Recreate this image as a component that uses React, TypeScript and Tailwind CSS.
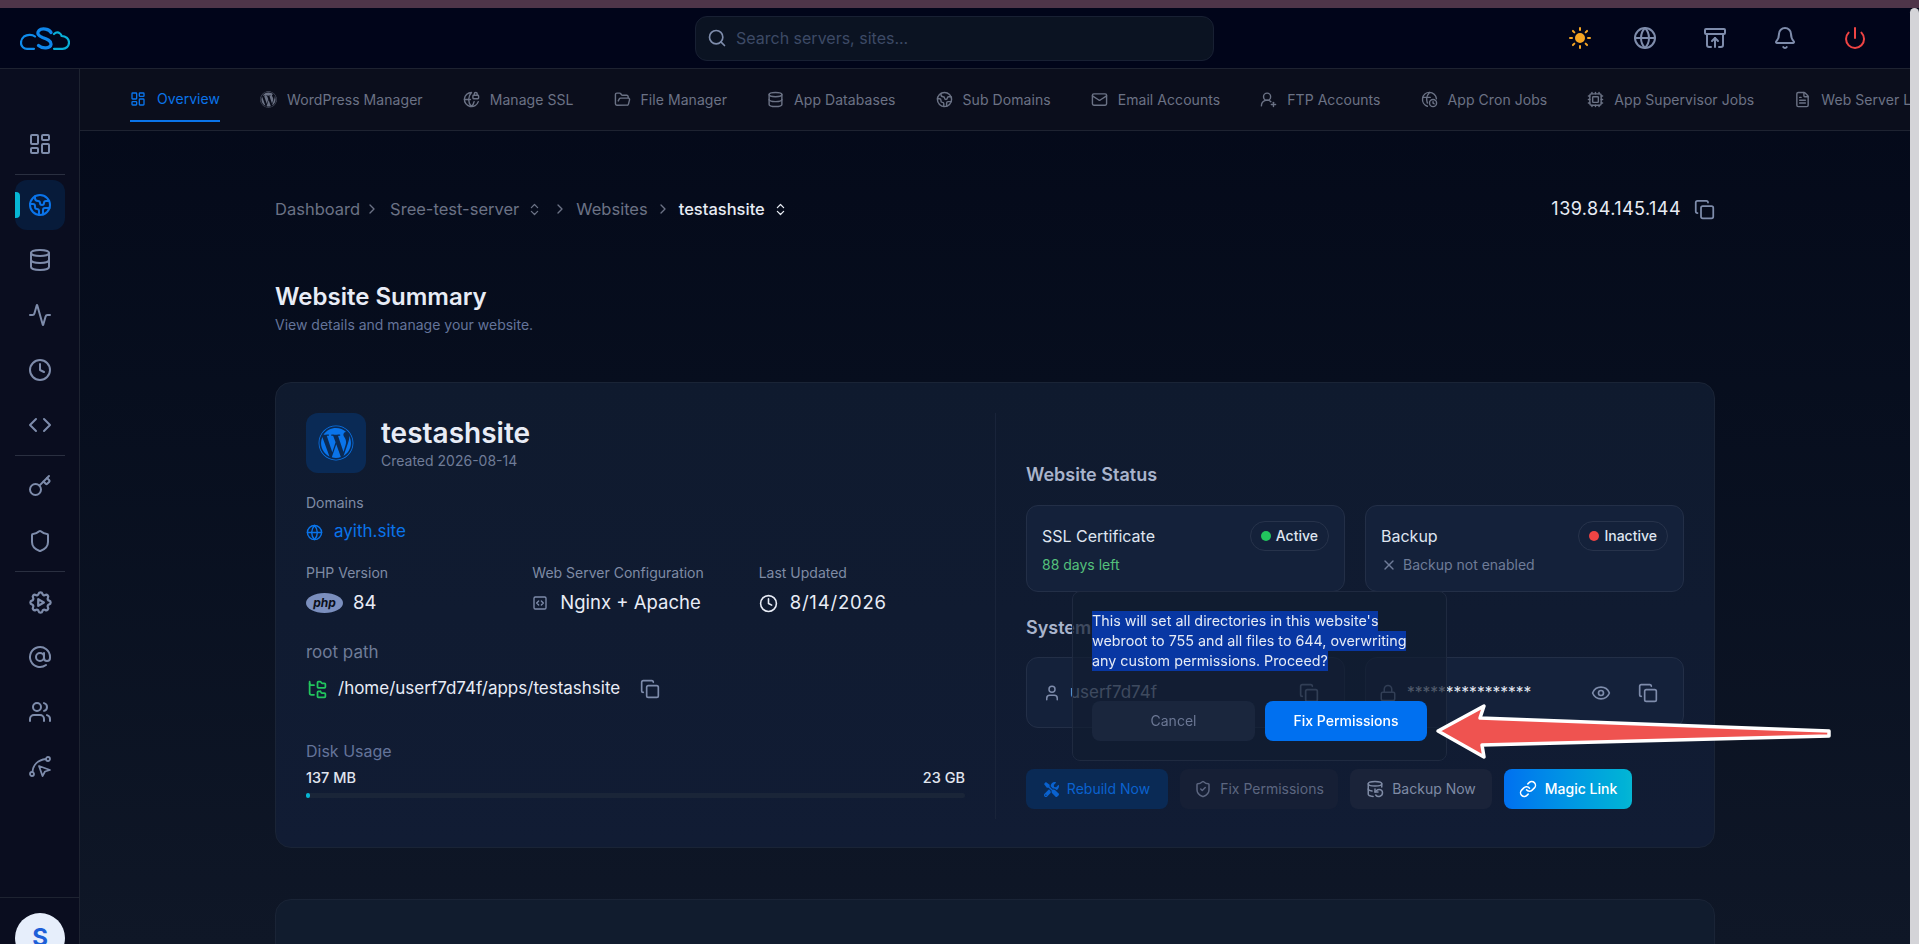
import {
  Activity,
  ArchiveRestore,
  AtSign,
  Bell,
  ChevronRight,
  ChevronsUpDown,
  Clock,
  Code,
  Copy,
  Cpu,
  Database,
  DatabaseBackup,
  Earth,
  Eye,
  FileText,
  FolderOpen,
  FolderTree,
  Globe,
  GlobeLock,
  Key,
  LayoutDashboard,
  Link,
  Lock,
  Mail,
  Power,
  Search,
  Shield,
  ShieldCheck,
  SquareCode,
  Sun,
  User,
  UserRoundPlus,
  Users,
  X,
} from "lucide-react";
import { FaTools, FaWordpress } from "react-icons/fa";
import { TbSettingsAutomation } from "react-icons/tb";

function CronIcon({ size = 17 }: { size?: number }) {
  return (
    <svg width={size} height={size} viewBox="0 0 24 24" fill="none" stroke="currentColor" strokeWidth="2" strokeLinecap="round" strokeLinejoin="round">
      <path d="M12 2a10 10 0 0 0-3 19.5" />
      <path d="M21.8 11A10 10 0 0 0 12 2c-3 3-4 6-4 9 0 2 .4 4 1 6" />
      <path d="M3 9h10" />
      <circle cx="17" cy="17" r="5" />
      <path d="M17 15v2l1.5 1" />
    </svg>
  );
}

function RouteCursorIcon() {
  return (
    <svg width="24" height="24" viewBox="0 0 24 24" fill="none" stroke="currentColor" strokeWidth="1.8" strokeLinecap="round" strokeLinejoin="round">
      <circle cx="4" cy="19" r="2" />
      <circle cx="20" cy="4" r="2" />
      <path d="M4.500 17C5 10 10 5 18 4" />
      <path d="M11 11l11 4-5 1.500L14.500 21z" />
    </svg>
  );
}

function Logo() {
  return (
    <svg width="50" height="23" viewBox="0 0 50 23" fill="none" strokeWidth="2.200" strokeLinecap="round" strokeLinejoin="round">
      <path d="M15 9.500C12 7 7 7.500 4 9.500 1.500 11.500 1 14 1 16c0 3.500 3 5.800 6 5.800h7" stroke="#0f8cec" />
      <path d="M31 5.500C29.500 2 22 0.500 19 3.500c-2.500 2.800-0.500 5.500 3.500 7 4.500 1.500 9 3 8.500 7-0.500 4-8.500 4.500-12.500 1" stroke="#0f86ea" strokeWidth="3.200" />
      <path d="M34 7c2-2 4.500-1.800 6-0.500 1 0.800 1.500 1.800 1.500 2.500 4.500 0 7.500 3 7.500 6.500 0 3.800-3 6.300-6.500 6.300H34" stroke="#09b0d8" />
    </svg>
  );
}

const tabs = [
  { label: "WordPress Manager", icon: <FaWordpress size={17} /> },
  { label: "Manage SSL", icon: <GlobeLock size={17} /> },
  { label: "File Manager", icon: <FolderOpen size={17} /> },
  { label: "App Databases", icon: <Database size={17} /> },
  { label: "Sub Domains", icon: <Earth size={17} /> },
  { label: "Email Accounts", icon: <Mail size={17} /> },
  { label: "FTP Accounts", icon: <UserRoundPlus size={17} /> },
  { label: "App Cron Jobs", icon: <CronIcon /> },
  { label: "App Supervisor Jobs", icon: <Cpu size={17} /> },
  { label: "Web Server Logs", icon: <FileText size={17} /> },
];

function SideItem({ children }: { children: React.ReactNode }) {
  return <div className="w-[50px] h-[50px] flex items-center justify-center text-[#7e8cab] shrink-0">{children}</div>;
}

function Crumb({ children, tone = "text-[#6b7285]" }: { children: React.ReactNode; tone?: string }) {
  return <span className={`text-[16.5px] ${tone}`}>{children}</span>;
}

function CopyBtn({ size = 20 }: { size?: number }) {
  return <Copy size={size} className="text-[#7e8cab] shrink-0" />;
}

function StatusCard({ title, badge, dot, children }: { title: string; badge: string; dot: string; children: React.ReactNode }) {
  return (
    <div className="h-[87px] rounded-xl border border-[#232f47] bg-[#14213a] pl-[15px] pr-[15px] pt-[15px]">
      <div className="flex justify-between items-center h-[30px]">
        <span className="text-base text-[#dfe5f0]">{title}</span>
        <span className="h-[30px] px-[10px] rounded-full border border-[#27334b] flex items-center gap-[5px] text-sm font-medium text-[#dfe5f0]">
          <span className={`w-[10px] h-[10px] rounded-full ${dot}`} />
          {badge}
        </span>
      </div>
      <div className="mt-[4px] text-sm flex items-center h-5">{children}</div>
    </div>
  );
}

export default function App() {
  return (
    <div className="relative h-screen overflow-hidden flex flex-col bg-[#030817] font-['Inter','Liberation_Sans',sans-serif]">
      <div className="h-[8px] bg-[#4e3549] shrink-0" />
      <div className="flex flex-1 min-h-0">
        <div className="flex-1 min-w-0 flex flex-col">
          {/* Header */}
          <header className="h-[61px] shrink-0 flex items-center bg-[#01051a] border-b border-[#1e2331]">
            <div className="w-[695px] pl-[20px] shrink-0 flex">
              <Logo />
            </div>
            <div className="w-[519px] h-[45px] rounded-xl bg-[#0b1322] border border-[#182033] flex items-center pl-[11px] gap-[9px] shrink-0">
              <Search size={20} className="text-[#7e8cab]" />
              <span className="text-base text-[#3d4a66]">Search servers, sites...</span>
            </div>
            <div className="ml-[354px] flex items-center gap-[46px]">
              <Sun size={24} className="text-[#f5a524] -mr-[5px]" fill="#f5a524" />
              <Globe size={24} className="text-[#7e8cab]" />
              <ArchiveRestore size={24} className="text-[#7e8cab]" />
              <Bell size={24} className="text-[#7e8cab]" />
              <Power size={24} className="text-[#ef4444]" />
            </div>
          </header>

          <div className="flex flex-1 min-h-0">
            {/* Sidebar */}
            <aside className="w-[80px] shrink-0 border-r border-[#1e2331] bg-[#0a0d1f] flex flex-col">
              <div className="pt-[50px] pl-[15px] flex flex-col gap-[5px] flex-1">
                <SideItem><LayoutDashboard size={24} /></SideItem>
                <div className="w-[50px] h-px bg-[#2a2f40]" />
                <div className="relative w-[50px] h-[50px] rounded-xl bg-[#071b3a] flex items-center justify-center text-[#0a74ea]">
                  <span className="absolute left-0 top-[12px] w-[5px] h-[26px] rounded-r bg-[#06b6d4]" />
                  <Earth size={24} />
                </div>
                <SideItem><Database size={24} /></SideItem>
                <SideItem><Activity size={24} /></SideItem>
                <SideItem><Clock size={24} /></SideItem>
                <SideItem><Code size={24} /></SideItem>
                <div className="w-[50px] h-px bg-[#2a2f40]" />
                <SideItem><Key size={24} /></SideItem>
                <SideItem><Shield size={24} /></SideItem>
                <div className="w-[50px] h-px bg-[#2a2f40]" />
                <SideItem><TbSettingsAutomation size={27} /></SideItem>
                <SideItem><AtSign size={24} /></SideItem>
                <SideItem><Users size={24} /></SideItem>
                <SideItem><RouteCursorIcon /></SideItem>
              </div>
              <div className="h-[47px] border-t border-[#1e2331] pt-[15px] pl-[15px] shrink-0">
                <div className="w-[50px] h-[50px] rounded-full bg-[#e6eefb] flex items-center justify-center text-[24px] font-bold text-[#1d5fd8]">S</div>
              </div>
            </aside>

            <div className="flex-1 min-w-0 flex flex-col bg-gradient-to-b from-[#040919] to-[#0f1727]">
              {/* Tabs */}
              <nav className="h-[62px] shrink-0 bg-[#0b0e1c] border-b border-[#1e2331] flex items-center pl-[50px] gap-[40px] overflow-hidden whitespace-nowrap text-sm tracking-[0.06px] text-[#6b7285]">
                <div className="h-[45px] pt-[1px] flex items-center gap-[11px] text-[#0a74ea] border-b-2 border-[#0a74ea] shrink-0 -mt-px">
                  <LayoutDashboard size={16} />
                  Overview
                </div>
                {tabs.map((tab) => (
                  <div key={tab.label} className="flex items-center gap-[10px] shrink-0">
                    {tab.icon}
                    {tab.label}
                  </div>
                ))}
              </nav>

              {/* Page */}
              <main className="flex-1 min-h-0 overflow-hidden px-[195px]">
                <div className="mt-[66px] h-6 flex items-center justify-between">
                  <div className="flex items-center">
                    <Crumb>Dashboard</Crumb>
                    <ChevronRight size={16} className="text-[#6b7285] ml-[4px] mr-[10px]" />
                    <Crumb>Sree-test-server</Crumb>
                    <ChevronsUpDown size={15} className="text-[#6b7285] ml-[8px] mr-[10px]" />
                    <ChevronRight size={16} className="text-[#6b7285] mr-[8px]" />
                    <Crumb>Websites</Crumb>
                    <ChevronRight size={16} className="text-[#6b7285] ml-[7px] mr-[8px]" />
                    <Crumb tone="text-[#e8ecf4] font-medium">testashsite</Crumb>
                    <ChevronsUpDown size={15} className="text-[#e8ecf4] ml-[8px]" />
                  </div>
                  <div className="flex items-center gap-[13px] text-lg tracking-[0.45px] text-[#e8ecf4]">
                    139.84.145.144
                    <Copy size={21} className="text-[#7e8cab]" />
                  </div>
                </div>

                <h1 className="mt-[60px] text-2xl leading-8 font-semibold text-[#e8ecf6]">Website Summary</h1>
                <p className="text-sm leading-5 mt-[2px] text-[#64749a]">View details and manage your website.</p>

                {/* Summary card */}
                <section className="mt-[47px] h-[466px] rounded-2xl border border-[#1a2436] bg-gradient-to-b from-[#0f1a2e] to-[#111c34] p-[30px] flex">
                  <div className="w-[659px] shrink-0">
                    <div className="flex items-center gap-[15px]">
                      <div className="w-[60px] h-[60px] rounded-xl bg-[#0a2a55] flex items-center justify-center text-[#0a74ea]">
                        <FaWordpress size={36} />
                      </div>
                      <div>
                        <div className="text-[28px] leading-9 font-semibold text-[#e8ecf6]">testashsite</div>
                        <div className="text-sm leading-5 text-[#6f7c98]">Created 2026-08-14</div>
                      </div>
                    </div>

                    <div className="mt-[20px] text-sm leading-5 text-[#7f8ba5]">Domains</div>
                    <div className="mt-[7px] h-6 flex items-center gap-[11px] text-[#0a74ea] text-[17px]">
                      <Globe size={17} />
                      ayith.site
                    </div>

                    <div className="mt-[19px] grid grid-cols-3 gap-5">
                      <div>
                        <div className="text-sm leading-5 text-[#7f8ba5]">PHP Version</div>
                        <div className="mt-[8px] h-6 flex items-center gap-[10px] text-[18.5px] text-[#e8ecf6]">
                          <span className="w-[37px] h-[20px] rounded-[50%] bg-[#7b8fbe] flex items-center justify-center text-[12px] leading-none italic font-bold text-[#0b0f1a]">php</span>
                          84
                        </div>
                      </div>
                      <div>
                        <div className="text-sm leading-5 text-[#7f8ba5]">Web Server Configuration</div>
                        <div className="mt-[8px] h-6 flex items-center gap-[12px] text-[18.5px] text-[#e8ecf6]">
                          <SquareCode size={16} className="text-[#7e8cab]" />
                          Nginx + Apache
                        </div>
                      </div>
                      <div>
                        <div className="text-sm leading-5 text-[#7f8ba5]">Last Updated</div>
                        <div className="mt-[8px] h-6 flex items-center gap-[12px] text-[18.5px] tracking-[0.8px] text-[#e8ecf6]">
                          <Clock size={19} />
                          8/14/2026
                        </div>
                      </div>
                    </div>

                    <div className="mt-[25px] text-[17px] leading-6 text-[#6f7c98]">root path</div>
                    <div className="mt-[13px] h-6 flex items-center text-[17px] text-[#e8ecf6]">
                      <FolderTree size={21} className="text-[#22c55e] ml-[1px] mr-[10px]" />
                      /home/userf7d74f/apps/testashsite
                      <span className="ml-[20px]"><CopyBtn /></span>
                    </div>

                    <div className="mt-[38px] text-base leading-6 text-[#64749a]">Disk Usage</div>
                    <div className="mt-[5px] flex justify-between text-[14.5px] leading-5 font-medium text-[#e0e5ef]">
                      <span>137 MB</span>
                      <span>23 GB</span>
                    </div>
                    <div className="mt-[5px] h-[5px] rounded-full bg-[#1a2538]">
                      <div className="h-full w-[4px] rounded-full bg-[#06b6d4]" />
                    </div>
                  </div>

                  <div className="ml-[30px] w-px h-[406px] bg-[#19243a] shrink-0" />

                  <div className="ml-[30px] w-[658px] shrink-0 pt-[48px]">
                    <h2 className="text-lg leading-7 font-semibold text-[#a9b4cc]">Website Status</h2>
                    <div className="mt-[16px] grid grid-cols-2 gap-5">
                      <StatusCard title="SSL Certificate" badge="Active" dot="bg-[#22c55e]">
                        <span className="text-[#55c07c]">88 days left</span>
                      </StatusCard>
                      <StatusCard title="Backup" badge="Inactive" dot="bg-[#ef4444]">
                        <span className="flex items-center gap-[6px] text-[#6f7c98]">
                          <X size={16} />
                          Backup not enabled
                        </span>
                      </StatusCard>
                    </div>

                    <h2 className="mt-[22px] text-lg leading-7 font-semibold text-[#a9b4cc]">System User</h2>
                    <div className="mt-[15px] grid grid-cols-2 gap-5">
                      <div className="h-[71px] rounded-xl border border-[#232f47] bg-[#14213a] px-[15px] flex items-center">
                        <User size={18} className="text-[#7e8cab] ml-[1px] mr-[9px]" />
                        <span className="flex-1 text-[17px] text-[#a9b4cc]">userf7d74f</span>
                        <span className="mr-[10px]"><CopyBtn /></span>
                      </div>
                      <div className="h-[71px] rounded-xl border border-[#232f47] bg-[#14213a] px-[15px] flex items-center">
                        <Lock size={18} className="text-[#7e8cab] mr-[10px] -ml-[2px]" />
                        <span className="flex-1 text-[15.5px] text-[#e0e5ef]">****************</span>
                        <Eye size={20} className="text-[#7e8cab] mr-[27px]" />
                        <span className="mr-[10px]"><CopyBtn /></span>
                      </div>
                    </div>

                    <div className="mt-[41px] flex gap-[12px] text-sm">
                      <button className="w-[142px] h-10 rounded-lg bg-[#0a2a55] text-[#0a62cf] flex items-center justify-center gap-[8px]">
                        <FaTools size={15} />
                        Rebuild Now
                      </button>
                      <button className="w-[158px] h-10 rounded-lg bg-[#161f35] text-[#5c6680] flex items-center justify-center gap-[8px]">
                        <ShieldCheck size={18} />
                        Fix Permissions
                      </button>
                      <button className="w-[142px] h-10 rounded-lg bg-[#1a2339] text-[#7f8ba5] flex items-center justify-center gap-[8px]">
                        <DatabaseBackup size={18} />
                        Backup Now
                      </button>
                      <button className="w-[128px] h-10 rounded-lg bg-gradient-to-r from-[#0070f0] to-[#06b6d4] text-white font-medium flex items-center justify-center gap-[8px]">
                        <Link size={18} />
                        Magic Link
                      </button>
                    </div>
                  </div>
                </section>

                <section className="mt-[51px] h-[200px] rounded-2xl border border-[#1a2436] bg-[#111c2e]" />
              </main>
            </div>
          </div>
        </div>
        {/* Scrollbar */}
        <div className="w-[9px] shrink-0 bg-[#d4d4d8] rounded-t-md" />
      </div>

      {/* Confirm popover */}
      <div className="absolute left-[1072px] top-[591px] w-[375px] h-[170px] rounded-lg border border-[#1f2a40] bg-[#111c30]/70 backdrop-blur-[0.5px] px-[19px] pt-[19px]">
        <div className="text-[14.3px] leading-5 text-[#e6ebf5]">
          <div className="w-fit bg-[#0837a3]">This will set all directories in this website's</div>
          <div className="w-fit bg-[#0837a3]">webroot to 755 and all files to 644, overwriting</div>
          <div className="w-fit bg-[#0837a3]">any custom permissions. Proceed?</div>
        </div>
        <div className="mt-[30px] flex gap-[10px] text-sm">
          <button className="w-[163px] h-10 rounded-lg bg-[#1a263d] text-[#6b7794]">Cancel</button>
          <button className="w-[162px] h-10 rounded-lg bg-[#0070f0] text-white font-medium">Fix Permissions</button>
        </div>
      </div>

      {/* Annotation arrow */}
      <svg className="absolute left-[1430px] top-[698px]" width="410" height="66" viewBox="1430 698 410 66" fill="#ef5350" stroke="#ffffff" strokeWidth="3.500" strokeLinejoin="round">
        <path d="M1438 731L1484 706L1480 718L1829 731V736L1482 745L1484 757Z" />
      </svg>
    </div>
  );
}
